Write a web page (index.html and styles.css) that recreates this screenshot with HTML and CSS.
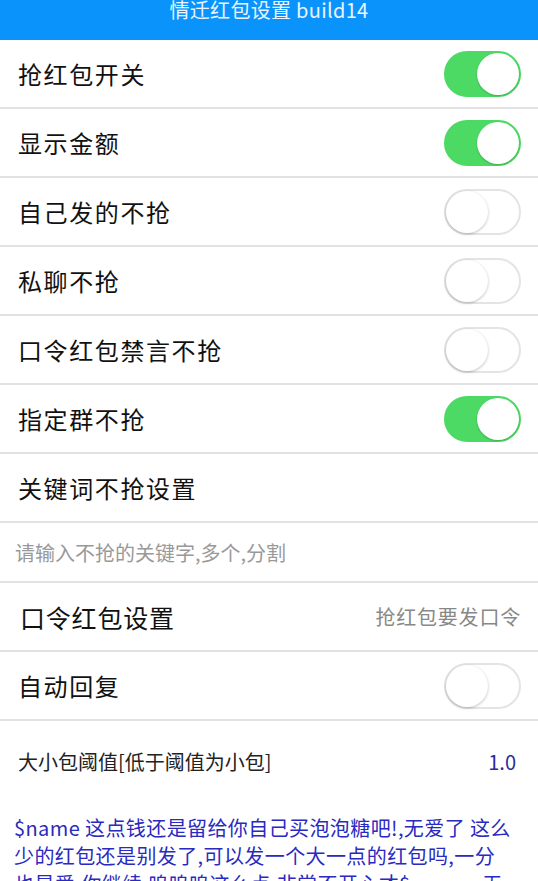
FILE: index.html
```html
<!DOCTYPE html>
<html lang="zh-CN">
<head>
  <meta charset="UTF-8" />
  <meta name="viewport" content="width=device-width, initial-scale=1" />
  <title>情迁红包设置</title>
  <link rel="stylesheet" href="styles.css">
</head>
<body>
  <div class="topbar">情迁红包设置 build14</div>

  <div class="row">
    <span class="label">抢红包开关</span>
    <span class="switch on"></span>
  </div>
  <div class="row">
    <span class="label">显示金额</span>
    <span class="switch on"></span>
  </div>
  <div class="row">
    <span class="label">自己发的不抢</span>
    <span class="switch"></span>
  </div>
  <div class="row">
    <span class="label">私聊不抢</span>
    <span class="switch"></span>
  </div>
  <div class="row">
    <span class="label">口令红包禁言不抢</span>
    <span class="switch"></span>
  </div>
  <div class="row">
    <span class="label">指定群不抢</span>
    <span class="switch on"></span>
  </div>
  <div class="row">
    <span class="label">关键词不抢设置</span>
  </div>
  <div class="row input-row">
    <input type="text" class="keywords" placeholder="请输入不抢的关键字,多个,分割" />
  </div>
  <div class="row">
    <span class="label big">口令红包设置</span>
    <span class="hint">抢红包要发口令</span>
  </div>
  <div class="row">
    <span class="label">自动回复</span>
    <span class="switch"></span>
  </div>
  <div class="row plain">
    <span class="small-label">大小包阈值[低于阈值为小包]</span>
    <span class="value">1.0</span>
  </div>

  <p class="reply">$name 这点钱还是留给你自己买泡泡糖吧!,无爱了 这么少的红包还是别发了,可以发一个大一点的红包吗,一分也是爱,你继续,呜呜呜这么点,非常不开心才$money,无爱了</p>
</body>
</html>
```

FILE: styles.css
```css
body {
  margin: 0;
  background: #fff;
  font-family: "Noto Sans CJK SC", "Noto Sans", sans-serif;
  color: #111;
}
.topbar {
  height: 40px;
  background: #0a94fb;
  color: #e8f4ff;
  font-size: 20px;
  line-height: 20px;
  text-align: center;
  letter-spacing: 0.3px;
}
.row {
  display: flex;
  align-items: center;
  justify-content: space-between;
  height: 67px;
  padding: 0 17px 0 18px;
  border-bottom: 2px solid #e2e2e2;
}
.label {
  font-size: 24px;
  letter-spacing: 1.6px;
}
.label.big {
  font-size: 25px;
  letter-spacing: 0.8px;
  margin-left: 2px;
}
.switch {
  position: relative;
  width: 73px;
  height: 42px;
  border-radius: 23px;
  border: 2px solid #e4e4e4;
  background: #fff;
}
.switch::after {
  content: "";
  position: absolute;
  top: 0;
  left: 0;
  width: 42px;
  height: 42px;
  border-radius: 50%;
  background: #fff;
  box-shadow: 0 1px 3px rgba(0,0,0,0.25);
}
.switch.on {
  background: #4cd964;
  border-color: #4cd964;
}
.switch.on::after {
  left: 31px;
  box-shadow: 0 1px 2px rgba(0,0,0,0.2);
}
.input-row {
  height: 58px;
  padding-left: 15px;
}
.keywords {
  width: 100%;
  border: none;
  outline: none;
  padding: 0;
  font-family: inherit;
  font-size: 20px;
  background: transparent;
}
.keywords::placeholder {
  color: #999;
}
.hint {
  font-size: 20px;
  letter-spacing: 0.8px;
  color: #888;
}
.plain {
  border-bottom: none;
  height: 80px;
  padding-right: 22px;
}
.small-label {
  font-size: 20px;
  color: #222;
}
.value {
  font-size: 20px;
  color: #2b2ba0;
}
.reply {
  margin: 13px 26px 0 14px;
  font-size: 20px;
  line-height: 28px;
  letter-spacing: 0.4px;
  color: #2a2ac0;
}
```
